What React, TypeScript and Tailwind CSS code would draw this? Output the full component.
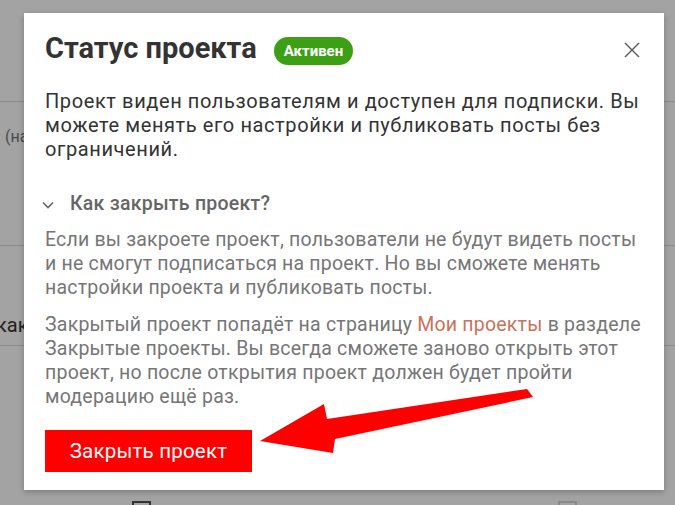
import React from 'react';

const font = { fontFamily: 'Roboto, "Noto Sans", sans-serif' };

const ProjectStatusModal = () => {
	return (
		<div className="absolute left-[24px] top-[13px] w-[640px] h-[477px] bg-white shadow-[0_2px_6px_rgba(0,0,0,0.25)] pl-[21px] pr-[24px] pt-[19px]">
			<div className="flex items-start justify-between">
				<div className="flex items-center gap-[17px] h-[32px]">
					<h2 className="text-[29px] leading-[32px] font-bold text-[#333333]">Статус проекта</h2>
					<span className="mt-[6px] h-[28px] px-[10px] rounded-full bg-[#3d9f13] text-white text-[15px] font-bold flex items-center">
						Активен
					</span>
				</div>
				<button className="mt-[10px] w-[16px] h-[16px] text-[#555555]">
					<svg viewBox="0 0 16 16" width="16" height="16" fill="none" stroke="currentColor" strokeWidth="1.4">
						<path d="M1 1 L15 15 M15 1 L1 15" />
					</svg>
				</button>
			</div>
			<p className="mt-[25px] text-[20px] leading-[24px] tracking-[0.6px] text-[#333333] whitespace-nowrap">
				Проект виден пользователям и доступен для подписки. Вы
				<br />
				можете менять его настройки и публиковать посты без
				<br />
				ограничений.
			</p>
			<div className="mt-[31px] flex items-center text-[#666666]">
				<svg viewBox="0 0 12 8" width="12" height="8" fill="none" stroke="currentColor" strokeWidth="1.6" className="ml-[-3px] mt-[1px]">
					<path d="M1 1.5 L6 6.5 L11 1.5" />
				</svg>
				<span className="ml-[16px] text-[19.5px] leading-[24px] tracking-[0.25px] font-medium">Как закрыть проект?</span>
			</div>
			<p className="mt-[12px] text-[19.5px] leading-[24px] tracking-[0.2px] text-[#767676] whitespace-nowrap">
				Если вы закроете проект, пользователи не будут видеть посты
				<br />
				и не смогут подписаться на проект. Но вы сможете менять
				<br />
				настройки проекта и публиковать посты.
			</p>
			<p className="mt-[13px] text-[19.5px] leading-[24px] tracking-[0.22px] text-[#767676] whitespace-nowrap">
				Закрытый проект попадёт на страницу <span className="text-[#c8735b]">Мои проекты</span> в разделе
				<br />
				Закрытые проекты. Вы всегда сможете заново открыть этот
				<br />
				проект, но после открытия проект должен будет пройти
				<br />
				модерацию ещё раз.
			</p>
			<button className="mt-[21px] w-[207px] h-[42px] bg-[#ff0000] text-white text-[20.5px] tracking-[0.2px] flex items-center justify-center">
				Закрыть проект
			</button>
		</div>
	);
};

export default function App() {
	return (
		<div className="relative w-[675px] h-[505px] overflow-hidden bg-[#a3a3a3]" style={font}>
			{/* page under the overlay */}
			<div className="flex flex-col">
				<div className="h-[102px] border-b border-[#8a8a8a]" />
				<div className="h-[144px] border-b border-[#8a8a8a] pl-[5px] pt-[23px] text-[16px] text-[#4a4a4a]">(на</div>
				<div className="h-[100px] border-b border-[#8a8a8a] flex items-end pb-[5px] text-[20px] text-[#1e1e1e]">
					<span className="ml-[-4px]">как</span>
				</div>
				<div className="h-[159px] relative">
					<div className="absolute left-[132px] top-[155px] w-[19px] h-[19px] border-2 border-[#333333]" />
					<div className="absolute left-[558px] top-[155px] w-[19px] h-[19px] border-2 border-[#8a8a8a]" />
				</div>
			</div>

			<ProjectStatusModal />

			{/* red arrow pointing at the button */}
			<svg className="absolute left-0 top-0 pointer-events-none" width="675" height="505" viewBox="0 0 675 505">
				<polygon points="527,389 533,397 335,439 333,453 260,441 324,404 327,419" fill="#ff0000" />
			</svg>
		</div>
	);
}
